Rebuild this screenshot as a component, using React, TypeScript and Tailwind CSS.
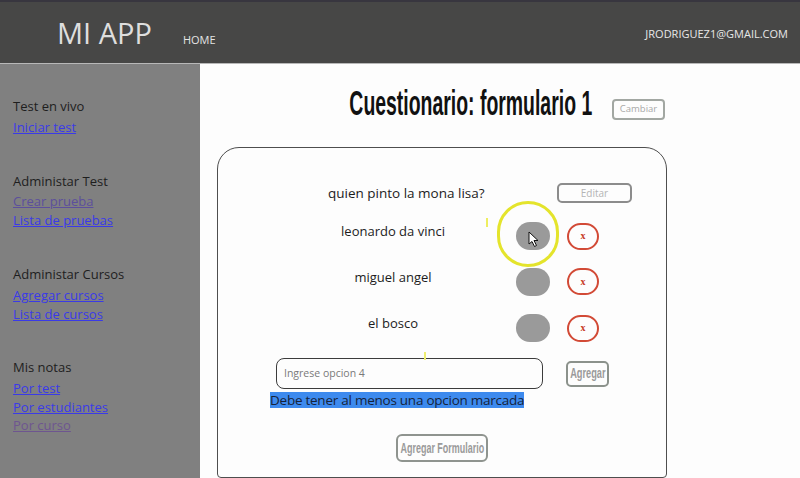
import React from "react";

const sans = { fontFamily: '"Open Sans", "Noto Sans", sans-serif' };

function Cursor() {
  return (
    <svg width="12" height="17" viewBox="0 0 12 17" className="absolute left-[12px] top-[9px]">
      <path d="M1 1 L1 13 L4 10.5 L6.5 15.5 L8.5 14.5 L6 9.5 L10 9.5 Z" fill="#fff" stroke="#111" strokeWidth="1" strokeLinejoin="round" />
    </svg>
  );
}

function Option({ label, h, mt, selected }: { label: string; h: string; mt: string; selected?: boolean }) {
  return (
    <div className={`flex items-center ${mt} ${h}`}>
      <div className="mb-[8px] w-[226px] text-center text-[13px] text-[#1c1c1c]">{label}</div>
      <div className="relative ml-[10px] h-[28px] w-[34px] rounded-full bg-[#9a9a9a]">
        {selected && (
          <>
            <div className="absolute left-[-19px] top-[-21px] h-[66px] w-[62px] rounded-full border-[3px] border-[#e4e42c]" />
            <div className="absolute left-[-30px] top-[-4px] h-[9px] w-[2px] bg-[#eeee60]" />
            <Cursor />
          </>
        )}
      </div>
      <div className="ml-[17px] flex h-[27px] w-[32px] items-center justify-center rounded-full border-2 border-[#d24a36] text-[10px] font-bold leading-none text-[#c83a28]" style={{ fontFamily: '"Liberation Serif", serif' }}>
        x
      </div>
    </div>
  );
}

export default function App() {
  return (
    <div className="flex h-[478px] w-[800px] flex-col overflow-hidden bg-[#fdfdfd]" style={sans}>
      <header className="flex h-[64px] items-center border-t-2 border-b border-t-[#38363f] border-b-[#b8b8b8] bg-[#474746]">
        <div className="ml-[57px] text-[29px] leading-none text-[#dedede]">MI APP</div>
        <div className="ml-[31px] mt-[14px] text-[11px] leading-none text-[#e4e4e4]">HOME</div>
        <div className="ml-auto mr-[12px] mt-[2px] text-[11px] leading-none text-[#e8e8e8]">JRODRIGUEZ1@GMAIL.COM</div>
      </header>
      <div className="flex flex-1">
        <aside className="flex w-[200px] flex-col gap-[35px] bg-[#808080] pl-[13px] pt-[33px] text-[13px] leading-[19px] text-[#1e1e1e]">
          <div>
            <div>Test en vivo</div>
            <div className="mt-[2px] flex flex-col">
              <a className="text-[#3a3ae8] underline">Iniciar test</a>
            </div>
          </div>
          <div>
            <div>Administar Test</div>
            <div className="mt-[1px] flex flex-col">
              <a className="text-[#5c4f9c] underline">Crear prueba</a>
              <a className="text-[#3a3ae8] underline">Lista de pruebas</a>
            </div>
          </div>
          <div>
            <div>Administar Cursos</div>
            <div className="mt-[2px] flex flex-col leading-[18.5px]">
              <a className="text-[#3a3ae8] underline">Agregar cursos</a>
              <a className="text-[#3a3ae8] underline">Lista de cursos</a>
            </div>
          </div>
          <div>
            <div>Mis notas</div>
            <div className="mt-[2px] flex flex-col leading-[18.5px]">
              <a className="text-[#3a3ae8] underline">Por test</a>
              <a className="text-[#3a3ae8] underline">Por estudiantes</a>
              <a className="text-[#6e5590] underline">Por curso</a>
            </div>
          </div>
        </aside>
        <main className="flex flex-1 flex-col">
          <div className="ml-[148px] mt-[18px] flex h-[40px] items-center">
            <div className="flex w-[245px] justify-center">
              <span className="inline-block scale-x-[0.555] whitespace-nowrap text-[35px] font-bold leading-none text-[#111]" style={{ fontFamily: '"Liberation Sans", Arial, sans-serif' }}>
                Cuestionario: formulario 1
              </span>
            </div>
            <div className="ml-[19px] mt-[14px] flex h-[21px] w-[53px] items-center justify-center rounded-[4px] border-2 border-[#a2a7a2] text-[9.5px] text-[#a8a8a8]">
              Cambiar
            </div>
          </div>
          <div className="ml-[17px] mt-[25px] flex h-[331px] w-[450px] flex-col rounded-t-[22px] rounded-b-[4px] border-[1.5px] border-[#4e4e4e] pl-[62px] pt-[35px]">
            <div className="flex h-[20px] items-center">
              <div className="ml-[48px] w-[229px] text-[13.5px] text-[#1c1c1c]">quien pinto la mona lisa?</div>
              <div className="flex h-[20px] w-[75px] items-center justify-center rounded-[5px] border-2 border-[#8c8c8c] text-[10px] text-[#b4b4b4]">
                Editar
              </div>
            </div>
            <Option label="leonardo da vinci" mt="mt-[19px]" h="h-[28px]" selected />
            <Option label="miguel angel" mt="mt-[17px]" h="h-[29px]" />
            <Option label="el bosco" mt="mt-[17px]" h="h-[30px]" />
            <div className="relative -ml-[4px] mt-[15px] flex h-[31px] items-center">
              <div className="flex h-[31px] w-[267px] items-center rounded-[8px] border-[1.5px] border-[#3c3c3c] pl-[7px] text-[10.5px] text-[#7a7a7a]">
                Ingrese opcion 4
              </div>
              <div className="ml-[23px] flex h-[26px] w-[43px] items-center justify-center rounded-[5px] border-2 border-[#8c928c]">
                <span className="inline-block scale-x-[0.66] whitespace-nowrap text-[14px] font-bold text-[#9a9a9a]" style={{ fontFamily: '"Liberation Sans", Arial, sans-serif' }}>
                  Agregar
                </span>
              </div>
              <div className="absolute left-[148px] top-[-6px] h-[8px] w-[2px] bg-[#eeee70]" />
            </div>
            <div className="-ml-[10px] mt-[3px] flex h-[16px]">
              <span className="bg-[#3d8aee] text-[13.5px] leading-[16px] tracking-[-0.25px] text-[#16233a]">Debe tener al menos una opcion marcada</span>
            </div>
            <div className="-ml-[62px] mt-[26px] flex justify-center">
              <div className="flex h-[28px] w-[92px] items-center justify-center rounded-[6px] border-2 border-[#8f948f]">
                <span className="inline-block scale-x-[0.64] whitespace-nowrap text-[14px] font-bold text-[#9a9a9a]" style={{ fontFamily: '"Liberation Sans", Arial, sans-serif' }}>
                  Agregar Formulario
                </span>
              </div>
            </div>
          </div>
        </main>
      </div>
    </div>
  );
}
